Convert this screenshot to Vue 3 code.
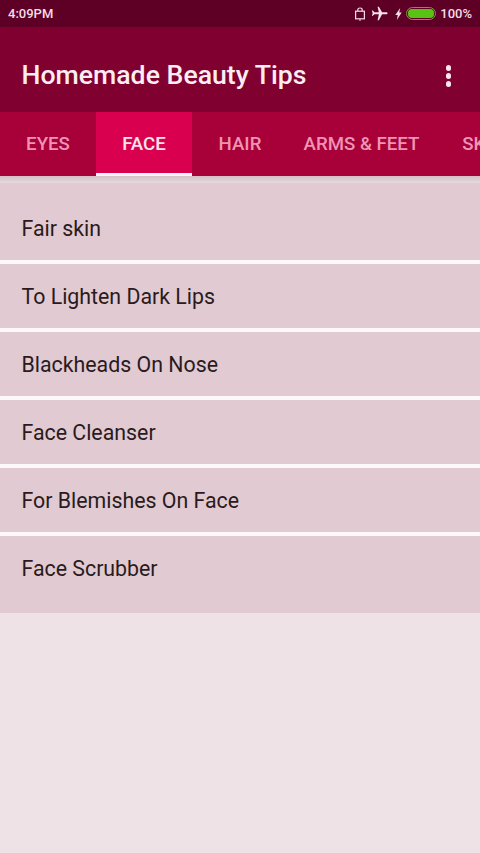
<script setup>
const tabs = [
  { label: 'EYES', width: 96 },
  { label: 'FACE', width: 96, active: true },
  { label: 'HAIR', width: 96 },
  { label: 'ARMS & FEET', width: 147 },
  { label: 'SKIN', width: 96 }
]
const items = ['Fair skin', 'To Lighten Dark Lips', 'Blackheads On Nose', 'Face Cleanser', 'For Blemishes On Face', 'Face Scrubber']
</script>

<template>
  <div class="screen">
    <div class="status">
      <span class="time">4:09PM</span>
      <div class="status-right">
        <svg class="ic-lock" width="12" height="14" viewBox="0 0 12 14" fill="none" stroke="#f6dce6" stroke-width="1.2">
          <rect x="1.6" y="4.2" width="8.8" height="7.6" />
          <path d="M3.8 4V2.800C3.800 1.700 4.800 1 6 1s2.200.7 2.200 1.800V4" />
          <path d="M5 13h2" />
        </svg>
        <svg class="ic-plane" width="17" height="15" viewBox="0 0 16 14" preserveAspectRatio="none" fill="#f8e6ed">
          <path d="M15.600 6.700c0-.5-.6-.9-1.400-.9H10.400L7.400.6H6.200l1.200 5.200H3.200L1.800 4.300H.8l.8 2.400-.8 2.400h1l1.400-1.500h4.200L6.200 13.400h1.200l3-5.800h3.800c.8 0 1.400-.4 1.400-.9z" />
        </svg>
        <svg class="ic-bolt" width="7" height="12" viewBox="0 0 7 12" fill="#f6dce6">
          <path d="M5.200 0 .3 7h2.500L1.800 12l4.900-7.400H4.200z" />
        </svg>
        <div class="battery"><div class="battery-fill"></div></div>
        <span class="pct">100%</span>
      </div>
    </div>

    <header class="toolbar">
      <h1 class="title">Homemade Beauty Tips</h1>
      <div class="more"><i></i><i></i><i></i></div>
    </header>

    <nav class="tabs">
      <div
        v-for="t in tabs"
        :key="t.label"
        class="tab"
        :class="{ active: t.active }"
        :style="{ flexBasis: t.width + 'px' }"
      >{{ t.label }}</div>
    </nav>

    <div class="shadow"></div>

    <ul class="list">
      <li v-for="(it, i) in items" :key="it" class="item" :class="{ first: i === 0, last: i === items.length - 1 }">
        {{ it }}
      </li>
    </ul>
  </div>
</template>

<style>
html, body { margin: 0; padding: 0; background: #efe2e6; }
</style>

<style scoped>
.screen {
  width: 480px;
  height: 853px;
  overflow: hidden;
  background: #efe2e6;
  font-family: Roboto, "Liberation Sans", sans-serif;
  display: flex;
  flex-direction: column;
}
.status {
  height: 27px;
  flex: none;
  box-sizing: border-box;
  background: #5e0026;
  color: #f6dce6;
  display: flex;
  align-items: center;
  justify-content: space-between;
  padding: 0 8px;
  font-size: 13px;
  font-weight: 500;
}
.status-right {
  display: flex;
  align-items: center;
}
.ic-lock { margin-right: 5px; }
.ic-plane { margin-right: 7px; }
.ic-bolt { margin-right: 4px; }
.battery {
  width: 30px;
  height: 13px;
  box-sizing: border-box;
  border: 1.5px solid #8d8a4a;
  border-radius: 6.5px;
  padding: 1px;
  margin-right: 4px;
}
.battery-fill {
  height: 100%;
  border-radius: 4px;
  background: #58c312;
}
.toolbar {
  height: 85px;
  flex: none;
  box-sizing: border-box;
  background: #800030;
  display: flex;
  align-items: center;
  justify-content: space-between;
  padding: 10px 29px 0 21.5px;
}
.title {
  margin: 0;
  color: #fbeef3;
  font-size: 26.67px;
  font-weight: 500;
}
.more {
  display: flex;
  flex-direction: column;
  gap: 2.5px;
  margin-top: 3px;
}
.more i {
  display: block;
  width: 5.5px;
  height: 5.5px;
  border-radius: 50%;
  background: #f9e6ee;
}
.tabs {
  height: 64px;
  flex: none;
  display: flex;
  background: #a80038;
  overflow: hidden;
}
.tab {
  flex: none;
  box-sizing: border-box;
  display: flex;
  align-items: center;
  justify-content: center;
  white-space: nowrap;
  color: #f094b4;
  font-size: 18.67px;
  font-weight: 500;
  height: 64px;
  padding-top: 3px;
  border-bottom: 3px solid transparent;
}
.tab.active {
  background: #da0050;
  color: #fbe3ec;
  border-bottom-color: #fcf2f5;
}
.shadow {
  height: 7px;
  flex: none;
  background: linear-gradient(#d3c0c6, #e6d9dd);
}
.list {
  list-style: none;
  margin: 0;
  padding: 0;
  display: flex;
  flex-direction: column;
  gap: 4px;
  background: #fdf9fa;
}
.item {
  height: 64px;
  box-sizing: border-box;
  background: #e1cad1;
  color: #2a1a20;
  font-size: 21.33px;
  padding: 1px 0 0 21.5px;
  display: flex;
  align-items: center;
}
.item.first {
  height: 77px;
  padding-top: 13px;
}
.item.last {
  height: 77px;
  padding-bottom: 14px;
}
</style>
